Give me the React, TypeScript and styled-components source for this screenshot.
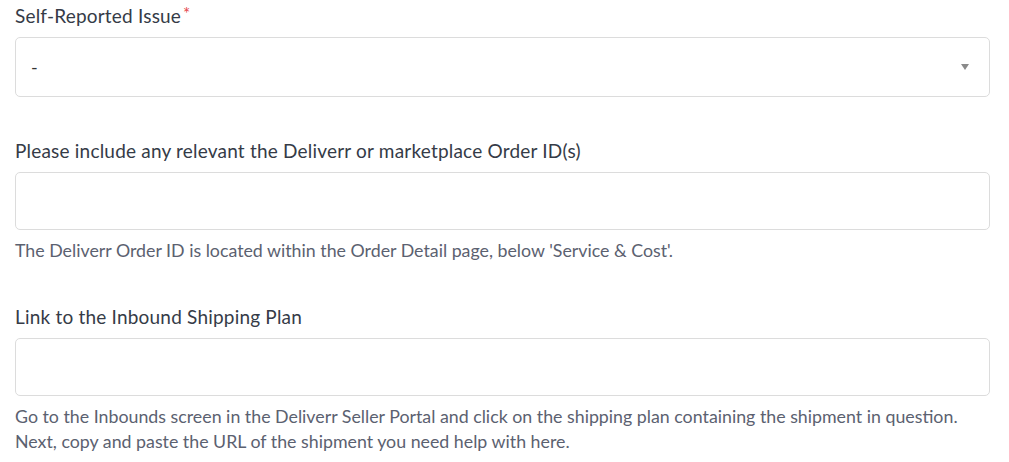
import styled, { createGlobalStyle } from "styled-components";

const GlobalStyle = createGlobalStyle`
  body {
    margin: 0;
    background: #ffffff;
    font-family: Lato, "Open Sans", sans-serif;
  }
`;

const Form = styled.form`
  display: flex;
  flex-direction: column;
  gap: 42px;
  padding: 4px 19px 0 15px;
`;

const Field = styled.div`
  display: flex;
  flex-direction: column;
`;

const Label = styled.label`
  color: #353b47;
  font-size: 19px;
  letter-spacing: 0.2px;
  line-height: 24px;
  margin-bottom: 9px;
`;

const Required = styled.span`
  color: #e5484d;
  font-size: 17px;
  vertical-align: top;
  line-height: 20px;
  margin-left: 2px;
`;

const SelectBox = styled.div`
  position: relative;
  display: flex;
  align-items: center;
  height: 60px;
  box-sizing: border-box;
  padding: 0 15px;
  border: 1px solid #dcdcdc;
  border-radius: 5px;
  color: #333;
  font-size: 18px;
`;

const Caret = styled.span`
  position: absolute;
  right: 20px;
  top: 50%;
  margin-top: -3px;
  width: 0;
  height: 0;
  border-left: 4px solid transparent;
  border-right: 4px solid transparent;
  border-top: 6px solid #8a8a8a;
`;

const Input = styled.input`
  height: 58px;
  box-sizing: border-box;
  border: 1px solid #dcdcdc;
  border-radius: 5px;
  padding: 0 16px;
  font-family: inherit;
  font-size: 17px;
  outline: none;
`;

const Help = styled.p`
  margin: 8px 0 0;
  color: #5b6170;
  font-size: 17.8px;
  line-height: 25px;
`;

export default function App() {
  return (
    <>
      <GlobalStyle />
      <Form>
        <Field>
          <Label>
            Self-Reported Issue<Required>*</Required>
          </Label>
          <SelectBox>
            -
            <Caret />
          </SelectBox>
        </Field>
        <Field>
          <Label>Please include any relevant the Deliverr or marketplace Order ID(s)</Label>
          <Input type="text" />
          <Help>The Deliverr Order ID is located within the Order Detail page, below 'Service &amp; Cost'.</Help>
        </Field>
        <Field>
          <Label>Link to the Inbound Shipping Plan</Label>
          <Input type="text" />
          <Help>
            Go to the Inbounds screen in the Deliverr Seller Portal and click on the shipping plan containing the shipment in question.
            <br />
            Next, copy and paste the URL of the shipment you need help with here.
          </Help>
        </Field>
      </Form>
    </>
  );
}
